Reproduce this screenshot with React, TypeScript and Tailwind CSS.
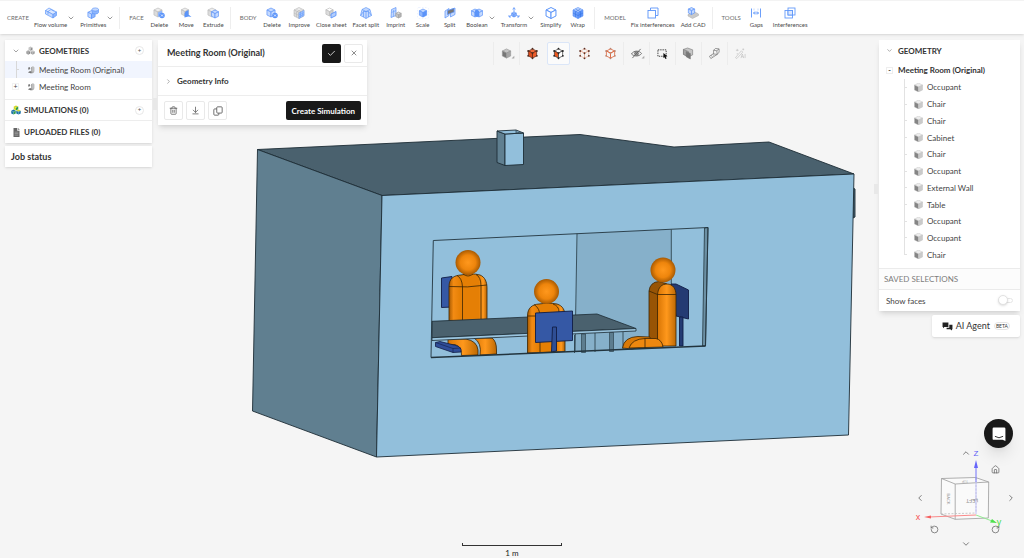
import React from "react";
import {
  ArrowDownToLine,
  Check,
  ChevronDown,
  ChevronLeft,
  ChevronRight,
  ChevronUp,
  Copy,
  House,
  RotateCcw,
  RotateCw,
  Trash2,
  X,
} from "lucide-react";

const BLUE = "#5b94f9";
const PALE = "#c4d9fe";

type CubeProps = {
  x?: number;
  y?: number;
  s?: number;
  top?: string;
  left?: string;
  right?: string;
  stroke?: string;
  width?: number;
};

function Cube({ x = 12, y = 12, s = 9, top = PALE, left = PALE, right = PALE, stroke = BLUE, width = 1.4 }: CubeProps) {
  const w = s * 0.9;
  const h = s * 0.45;
  return (
    <g stroke={stroke} strokeWidth={width} strokeLinejoin="round">
      <path d={`M${x} ${y - s} L${x + w} ${y - s + h} L${x} ${y - s + 2 * h} L${x - w} ${y - s + h}Z`} fill={top} />
      <path d={`M${x - w} ${y - s + h} L${x} ${y - s + 2 * h} V${y + s} L${x - w} ${y + s - h}Z`} fill={left} />
      <path d={`M${x + w} ${y - s + h} L${x} ${y - s + 2 * h} V${y + s} L${x + w} ${y + s - h}Z`} fill={right} />
    </g>
  );
}

const greyCube = { top: "#ededed", left: "#dcdcdc", right: "#cfcfcf", stroke: "#bdbdbd" };

const icons: Record<string, React.ReactNode> = {
  flow: (
    <g stroke={BLUE} strokeWidth="1.3" strokeLinejoin="round">
      <path d="M1 7 L8 2 L23 10 L16 15Z" fill="#dce8ff" />
      <path d="M1 7 L16 15 V22 L1 14Z" fill={PALE} />
      <path d="M23 10 L16 15 V22 L23 17Z" fill="#8fb6fc" />
      <path d="M6 9 L12 5 L19 9 M6 9 V15" fill="none" />
    </g>
  ),
  primitives: (
    <g>
      <Cube x={9} y={15} s={8} right="#8fb6fc" />
      <path d="M10 5 V11 C12 15 22 15 23 11 V5" fill="#8fb6fc" stroke={BLUE} strokeWidth="1.3" />
      <ellipse cx="16.500" cy="5" rx="6.500" ry="3.200" fill={PALE} stroke={BLUE} strokeWidth="1.300" />
    </g>
  ),
  delete: (
    <g>
      <Cube x={10} y={11} s={9} {...greyCube} />
      <path d="M10 11 L18 7 V15 L10 20Z" fill="#8fb6fc" />
      <circle cx="18" cy="17" r="5.500" fill={BLUE} />
      <path d="M16 15 L20 19 M20 15 L16 19" stroke="white" strokeWidth="1.500" />
    </g>
  ),
  bodyDelete: (
    <g>
      <Cube x={10} y={11} s={9} />
      <circle cx="18" cy="17" r="5.500" fill={BLUE} />
      <path d="M16 15 L20 19 M20 15 L16 19" stroke="white" strokeWidth="1.500" />
    </g>
  ),
  move: (
    <g>
      <Cube x={10} y={10} s={8} {...greyCube} />
      <path d="M11 9 L17 6 V15 L23 20 L17 19 L9 21 V13Z" fill={BLUE} />
    </g>
  ),
  extrude: (
    <g>
      <Cube x={10} y={11} s={9} {...greyCube} />
      <Cube x={16} y={14} s={8} />
    </g>
  ),
  improve: (
    <g>
      <Cube {...greyCube} s={11} right={PALE} />
      <path d="M12 12 L22 7 V17 L12 23Z" fill="#b4cefd" stroke={BLUE} />
      <path d="M15 10 V21 M18.500 9 V19 M12 16 L22 11 M12 20 L22 14" stroke={BLUE} />
      <path d="M7 5 L17 10 M17 5 L7 10 V20 M2 12 L12 17" stroke="#b5b5b5" fill="none" />
    </g>
  ),
  sheet: (
    <g>
      <Cube x={9} y={10} s={8} {...greyCube} top="white" />
      <path d="M12 14 L22 9 V17 L12 22Z" fill="#b4cefd" stroke={BLUE} strokeWidth="1.800" />
    </g>
  ),
  facet: (
    <g stroke={BLUE} strokeWidth="1.300" strokeLinejoin="round">
      <path d="M12 1 L20 5 L23 17 L12 23 L1 17 L4 5Z" fill={PALE} />
      <path d="M4 5 L12 9 L20 5 M1 17 L7 9 L12 9 L17 9 L23 17 M12 9 V23 M7 9 V20 M17 9 V20" fill="none" />
    </g>
  ),
  imprint: (
    <g>
      <path d="M3 5 L12 1 V17 L2 21Z" fill={PALE} stroke={BLUE} strokeWidth="1.400" />
      <path d="M7 6 V18 M3 11 L12 7" stroke={BLUE} />
      <Cube x={17} y={16} s={6} top="#dcdcdc" left="#c4c4c4" right="#b4b4b4" stroke="#a5a5a5" />
    </g>
  ),
  scale: (
    <g>
      <rect x="1" y="1" width="22" height="22" rx="3" fill="none" stroke="#dbe7fe" strokeDasharray="3 3" />
      <Cube s={8} top={PALE} left="#8fb6fc" right={BLUE} />
    </g>
  ),
  split: (
    <g stroke={BLUE} strokeWidth="1.400">
      <path d="M2 8 L10 3 V17 L2 22Z" fill={PALE} />
      <path d="M13 5 L22 2 V15 L13 20Z" fill={PALE} />
      <path d="M7 7 L20 3 V10 L7 15Z" fill="#777" />
    </g>
  ),
  boolean: (
    <g>
      <Cube x={8} s={8} />
      <Cube x={16} s={8} />
      <path d="M12 5 L16 8 V18 L12 20 L8 18 V8Z" fill={BLUE} />
    </g>
  ),
  transform: (
    <g stroke={BLUE} strokeWidth="1.500">
      <path d="M12 2 V12 M9.500 5 L12 1 L14.500 5 M12 12 L2 20 M12 12 L22 20 M2 16 V20 H6 M22 16 V20 H18" fill="none" />
      <Cube y={15} s={5} left="#8fb6fc" right="#8fb6fc" />
    </g>
  ),
  simplify: <Cube s={11} top="white" left="white" right="white" width={2} />,
  wrap: (
    <g>
      <Cube s={11} top={PALE} left="#6fa0f9" right="#5b92f8" />
      <path d="M7 4 L17 9 V20 M17 4 L7 9 V20 M2 12 L12 17 L22 12" fill="none" stroke="#2f6fe0" />
    </g>
  ),
  fix: (
    <g fill="none" stroke={BLUE} strokeWidth="1.800">
      <path d="M7 7 V2 H22 V17 H17" />
      <rect x="2" y="7" width="15" height="15" fill="white" />
    </g>
  ),
  cad: (
    <g>
      <path d="M2 15 L14 9 L23 14 V17 L11 23 L2 18Z" fill="#c9c9c9" stroke="#aaa" />
      <Cube x={9} y={8} s={7} />
    </g>
  ),
  gaps: (
    <g fill="none" stroke={BLUE} strokeWidth="1.800">
      <path d="M3 3 V21 M21 3 V21 M7 12 H17 M10 9 L7 12 L10 15 M14 9 L17 12 L14 15" />
      <path d="M8 3 V7 M16 3 V7" stroke={PALE} />
    </g>
  ),
  interferences: (
    <g fill="none" stroke={BLUE} strokeWidth="1.700">
      <rect x="8" y="2" width="14" height="14" />
      <rect x="2" y="7" width="15" height="15" />
      <rect x="8" y="7" width="9" height="9" fill="#dbe7fe" />
    </g>
  ),
};

function Glyph({ name }: { name: string }) {
  return (
    <svg viewBox="0 0 24 24" className="size-3" aria-hidden="true">
      {icons[name]}
    </svg>
  );
}

type Tool = { label: string; icon: string; menu?: boolean };

const toolGroups: { title: string; tools: Tool[] }[] = [
  {
    title: "CREATE",
    tools: [
      { label: "Flow volume", icon: "flow", menu: true },
      { label: "Primitives", icon: "primitives", menu: true },
    ],
  },
  {
    title: "FACE",
    tools: [
      { label: "Delete", icon: "delete" },
      { label: "Move", icon: "move" },
      { label: "Extrude", icon: "extrude" },
    ],
  },
  {
    title: "BODY",
    tools: [
      { label: "Delete", icon: "bodyDelete" },
      { label: "Improve", icon: "improve" },
      { label: "Close sheet", icon: "sheet" },
      { label: "Facet split", icon: "facet" },
      { label: "Imprint", icon: "imprint" },
      { label: "Scale", icon: "scale" },
      { label: "Split", icon: "split" },
      { label: "Boolean", icon: "boolean", menu: true },
      { label: "Transform", icon: "transform", menu: true },
      { label: "Simplify", icon: "simplify" },
      { label: "Wrap", icon: "wrap" },
    ],
  },
  {
    title: "MODEL",
    tools: [
      { label: "Fix interferences", icon: "fix" },
      { label: "Add CAD", icon: "cad" },
    ],
  },
  {
    title: "TOOLS",
    tools: [
      { label: "Gaps", icon: "gaps" },
      { label: "Interferences", icon: "interferences" },
    ],
  },
];

function TopBar() {
  return (
    <header className="relative z-10 flex h-[34px] shrink-0 items-center border-t border-[#f3f3f3] bg-white pl-[7px] text-[6px] shadow-sm">
      {toolGroups.map((group, i) => (
        <section
          key={group.title}
          className={i ? "ml-[3px] flex items-center border-l border-[#eeeeee] pl-[9px]" : "flex items-center"}
        >
          <h2 className="mr-[2px] text-[#6b6b6b]">{group.title}</h2>
          {group.tools.map((tool) => (
            <button key={tool.label} className="flex items-center text-[#4a4a4a]">
              <span className="flex min-w-[27px] flex-col items-center gap-px px-[3px] leading-[9px] whitespace-nowrap">
                <Glyph name={tool.icon} />
                {tool.label}
              </span>
              {tool.menu && <ChevronDown className="-ml-[3px] mr-[2px] size-2 text-[#666]" />}
            </button>
          ))}
        </section>
      ))}
    </header>
  );
}

function AddButton({ label }: { label: string }) {
  return (
    <button
      aria-label={label}
      className="ml-auto flex size-[9px] items-center justify-center rounded-full border border-[#e8e8e8] text-[6px] leading-none text-[#555]"
    >
      +
    </button>
  );
}

function PartsIcon({ className, colors }: { className: string; colors: string[] }) {
  return (
    <svg viewBox="0 0 24 24" className={className} aria-hidden="true">
      <Cube x={12} y={7} s={6} top={colors[0]} left={colors[0]} right={colors[1]} stroke="none" />
      <Cube x={6} y={17} s={6} top={colors[2]} left={colors[2]} right={colors[1]} stroke="none" />
      <Cube x={18} y={17} s={6} top={colors[0]} left={colors[2]} right={colors[2]} stroke="none" />
    </svg>
  );
}

function MeshIcon() {
  return (
    <svg viewBox="0 0 24 24" className="size-2 shrink-0" aria-hidden="true">
      <path d="M12 4 L18 1 L22 4 V15 C22 20 17 23 11 22 L3 19 L9 16 C13 16 13 13 12 10Z" fill="#a9a9a9" />
      <path d="M3 5 L8 3 L10 8 L5 12Z M3 19 L9 16 L15 18 L11 22Z" fill="#777" />
      <path d="M18 1 V17" stroke="#e8e8e8" strokeWidth="2" />
    </svg>
  );
}

function LeftPanel() {
  return (
    <aside className="w-[147px] shrink-0 text-[8px] leading-[10px] text-[#444]">
      <div className="bg-white shadow-sm">
        <section className="border-b border-[#ededed] pb-[4px]">
          <div className="flex h-[21px] items-center pr-2 pl-[7px]">
            <button aria-label="Collapse geometries">
              <ChevronDown className="size-2 text-[#777]" />
            </button>
            <PartsIcon className="ml-[6px] size-[9px]" colors={["#c4c4c4", "#8b8b8b", "#a3a3a3"]} />
            <h2 className="ml-1 font-bold text-[#333]">GEOMETRIES</h2>
            <AddButton label="Add geometry" />
          </div>
          <ul>
            <li className="flex h-[17px] items-center bg-[#f1f5fe]">
              <span className="ml-[11px] flex h-full w-[3px] items-center border-l border-[#d8d8d8]">
                <i className="h-px w-full bg-[#d8d8d8]" />
              </span>
              <a href="#original" className="ml-2 flex items-center gap-1">
                <MeshIcon />
                Meeting Room (Original)
              </a>
            </li>
            <li className="flex h-[17px] items-center">
              <button
                aria-label="Expand Meeting Room"
                className="ml-[7px] flex size-[7px] items-center justify-center border border-[#f2f2f2] text-[7px] leading-none"
              >
                +
              </button>
              <a href="#room" className="ml-2 flex items-center gap-1">
                <MeshIcon />
                Meeting Room
              </a>
            </li>
          </ul>
        </section>
        <section className="flex h-[21px] items-center border-b border-[#ededed] pr-2 pl-[6px]">
          <PartsIcon className="size-[10px]" colors={["#d2d827", "#2f9c50", "#1c72a8"]} />
          <h2 className="ml-[3px] font-bold text-[#333]">SIMULATIONS (0)</h2>
          <AddButton label="Add simulation" />
        </section>
        <section className="flex h-[22px] items-center pl-[6px]">
          <svg viewBox="0 0 20 24" className="ml-px mr-[3px] size-[9px]" aria-hidden="true">
            <path d="M2 0 H12 V7 H18 V24 H2Z" fill="#666" />
            <path d="M14 0 L18 5 H14Z M5 11 H15 M5 15 H15 M5 19 H15" fill="#666" stroke="#bbb" strokeWidth="1.500" />
          </svg>
          <h2 className="font-bold text-[#333]">UPLOADED FILES (0)</h2>
        </section>
      </div>
      <h2 className="mt-[3px] bg-white py-[5px] pl-[6px] text-[9px] leading-[11px] font-bold text-[#333] shadow-sm">Job status</h2>
    </aside>
  );
}

function DetailPanel() {
  const square = "flex size-[19px] items-center justify-center rounded-[2px] border border-[#e9e9e9] bg-white text-[#555]";
  return (
    <section className="ml-[6px] w-[209px] shrink-0 self-start bg-white text-[8px] text-[#333] shadow-md">
      <div className="flex h-[27px] items-center gap-[3px] border-b border-[#ededed] pr-[4px] pl-[9px]">
        <h2 className="mr-auto text-[9px] font-bold">Meeting Room (Original)</h2>
        <button aria-label="Apply" className="flex size-[19px] items-center justify-center rounded-[2px] bg-[#191919] text-white">
          <Check className="size-[9px]" />
        </button>
        <button aria-label="Close" className={square}>
          <X className="size-2" />
        </button>
      </div>
      <button className="flex h-[29px] w-full items-center gap-[5px] border-b border-[#ededed] pl-[7px] font-bold">
        <ChevronRight className="size-[7px] text-[#777]" />
        Geometry Info
      </button>
      <div className="flex h-[29px] items-center gap-[3px] px-[6px]">
        <button aria-label="Delete geometry" className={square}>
          <Trash2 className="size-[9px]" />
        </button>
        <button aria-label="Download geometry" className={square}>
          <ArrowDownToLine className="size-[9px]" />
        </button>
        <button aria-label="Duplicate geometry" className={square}>
          <svg viewBox="0 0 24 24" className="size-[10px]" fill="none" stroke="currentColor" strokeWidth="2">
            <rect x="9" y="2" width="13" height="15" rx="2" />
            <path d="M9 7 H4 Q2 7 2 9 V20 Q2 22 4 22 H12 Q14 22 14 20 V17" />
          </svg>
        </button>
        <button className="ml-auto h-[19px] rounded-[2px] bg-[#191919] px-[6px] font-bold text-white">Create Simulation</button>
      </div>
    </section>
  );
}

function Dots({ color }: { color: string }) {
  const points = [
    [12, 1.5],
    [21.5, 6.5],
    [21.5, 17],
    [12, 22.5],
    [2.5, 17],
    [2.5, 6.5],
    [12, 11.5],
  ];
  return (
    <g fill={color}>
      {points.map(([x, y]) => (
        <circle key={`${x}-${y}`} cx={x} cy={y} r="2" />
      ))}
    </g>
  );
}

const viewTools: { label: string; art: React.ReactNode; rule?: boolean; menu?: boolean; on?: boolean }[] = [
  { label: "Render mode", rule: true, menu: true, art: <Cube s={10} top="#c4c4c4" left="#777" right="#a5a5a5" stroke="#949494" /> },
  {
    label: "Select bodies",
    rule: true,
    art: (
      <g>
        <Cube s={10} top="#f26a3a" left="#d94c1e" right="#ee5d2b" stroke="#5a2413" width={1.5} />
        <Dots color="#4a2a20" />
      </g>
    ),
  },
  {
    label: "Select faces",
    on: true,
    art: (
      <g>
        <Cube s={10} top="white" left="#e8571f" right="white" stroke="#333" width={1.5} />
        <Dots color="#222" />
      </g>
    ),
  },
  {
    label: "Select vertices",
    art: (
      <g>
        <Cube s={10} top="none" left="none" right="none" stroke="#e9aa93" />
        <Dots color="#5b2c1e" />
      </g>
    ),
  },
  {
    label: "Select edges",
    art: (
      <g>
        <Cube s={10} top="none" left="none" right="none" stroke="#e06a40" width={1.8} />
        <Dots color="#b9826f" />
      </g>
    ),
  },
  {
    label: "Hide",
    rule: true,
    menu: true,
    art: (
      <g fill="none" stroke="#666" strokeWidth="2">
        <path d="M1 13 C6 5 18 5 23 12 C18 19 7 19 1 13Z" />
        <circle cx="12" cy="12" r="4" fill="#999" />
        <path d="M3 22 L21 2" />
      </g>
    ),
  },
  {
    label: "Box select",
    rule: true,
    art: (
      <g>
        <rect x="2" y="4" width="18" height="14" fill="none" stroke="#333" strokeWidth="2" strokeDasharray="3 2" />
        <path d="M14 11 L23 18 L19 18.500 L21 23 L18.500 24 L16.500 20 L14 22Z" fill="#111" />
      </g>
    ),
  },
  {
    label: "Section cut",
    rule: true,
    art: (
      <g stroke="#777" strokeWidth="1.300" strokeLinejoin="round">
        <path d="M1 3 L10 0 L21 4 V15 L12 19 L1 14Z" fill="#c6c6c6" />
        <path d="M1 3 L12 8 V19 L1 14Z" fill="#a3a3a3" />
        <path d="M7 8 L16 12 V24 L7 19Z" fill="#777" />
      </g>
    ),
  },
  {
    label: "Measure",
    rule: true,
    art: (
      <g stroke="#777" strokeWidth="1.600" fill="none" strokeLinejoin="round">
        <path d="M10 13 V5 L14 1 L22 2 V9 L18 14 L10 13 M10 5 L17 6 L22 2 M17 6 L18 14" />
        <path d="M10 12 L1 18 L4 23 L18 14" />
        <path d="M5 16 L7 19 M9 14 L11 17" />
      </g>
    ),
  },
  {
    label: "AI selection",
    rule: true,
    art: (
      <g stroke="#c6c6c6" strokeWidth="1.600" fill="none">
        <path d="M1 21 L14 6 L17 9 L4 23Z M5 2 V7 M2 5 H8 M18 1 V5 M16 3 H20 M5 11 V14" />
        <path d="M13 22 L16 13 L19 22 M14 19 H18 M22 13 V22" />
      </g>
    ),
  },
];

function ViewBar() {
  return (
    <div role="toolbar" aria-label="Viewport" className="flex min-w-0 flex-1 items-start justify-center pt-[2px]">
      {viewTools.map((tool) => (
        <div
          key={tool.label}
          className={
            tool.rule
              ? "flex h-[23px] w-[26px] items-center justify-center border-l border-[#ececec]"
              : "flex h-[23px] w-[26px] items-center justify-center"
          }
        >
          <button
            aria-label={tool.label}
            className={
              tool.on
                ? "flex size-[23px] items-center justify-center rounded-[2px] border border-[#dbe6f8] bg-[#fbfbfb]"
                : "flex size-[21px] items-center justify-center"
            }
          >
            <svg viewBox="0 0 24 24" className="size-[11px] overflow-visible">
              {tool.art}
              {tool.menu && <path d="M29 17 V23 H23Z" fill="#aaa" />}
            </svg>
          </button>
        </div>
      ))}
    </div>
  );
}

const parts = [
  "Occupant",
  "Chair",
  "Chair",
  "Cabinet",
  "Chair",
  "Occupant",
  "External Wall",
  "Table",
  "Occupant",
  "Occupant",
  "Chair",
];

function RightPanel() {
  return (
    <aside className="flex w-[141px] shrink-0 flex-col text-[8px] leading-[10px] text-[#444]">
      <div className="bg-white shadow-md">
        <div className="flex h-[21px] items-center gap-[5px] pl-[7px] font-bold text-[#333]">
          <button aria-label="Collapse geometry">
            <ChevronDown className="size-[7px] text-[#777]" />
          </button>
          <h2>GEOMETRY</h2>
        </div>
        <div className="flex h-[18px] items-center gap-[5px] pl-[7px] font-bold text-[#333]">
          <button
            aria-label="Collapse Meeting Room"
            className="flex size-[7px] items-center justify-center border border-[#eeeeee] text-[7px] leading-none"
          >
            -
          </button>
          Meeting Room (Original)
        </div>
        <ul className="flex h-[184px] flex-col pl-[25px]">
          {parts.map((part, i) => (
            <li key={i} className="flex flex-1 items-center">
              <span className="flex h-full w-[3px] flex-col">
                <i className="w-full flex-1 border-b border-l border-[#e2e2e2]" />
                <i className={i < parts.length - 1 ? "w-full flex-1 border-l border-[#e2e2e2]" : "w-full flex-1"} />
              </span>
              <svg viewBox="0 0 24 24" className="mr-1 ml-[7px] size-[9px]" aria-hidden="true">
                <Cube s={12} top="#ececec" left="#858585" right="#cacaca" stroke="#bcbcbc" width={1} />
              </svg>
              {part}
            </li>
          ))}
        </ul>
        <h3 className="mt-[5px] border-y border-[#ebebeb] bg-[#fcfcfc] py-[5px] pl-[5px] text-[#7c7c7c]">SAVED SELECTIONS</h3>
        <label className="flex h-[21px] items-center justify-between pr-[7px] pl-[7px]">
          Show faces
          <input
            type="checkbox"
            className="relative h-[5px] w-[15px] appearance-none rounded-full border border-[#e6e6e6] bg-white before:absolute before:-top-[4px] before:-left-px before:size-[10px] before:rounded-full before:border before:border-[#e2e2e2] before:bg-white before:shadow-sm"
          />
        </label>
      </div>
      <button className="mt-1 flex h-[22px] items-center self-end rounded-[2px] bg-white px-[10px] text-[9px] text-[#333] shadow-sm">
        <svg viewBox="0 0 24 20" className="h-[9px] w-[11px]" aria-hidden="true">
          <path d="M1 1 H14 V11 H5 L2 14 V11 H1Z" fill="#222" />
          <path d="M16 6 H23 V16 H22 V19 L18 16 H10 V13 H16Z" fill="#222" />
        </svg>
        <span className="ml-[3px]">AI Agent</span>
        <span className="ml-1 rounded-full border border-[#e4e4e4] px-px text-[5px] leading-[6px]">BETA</span>
      </button>
    </aside>
  );
}

function Scene() {
  return (
    <svg
      viewBox="0 34 1024 524"
      className="absolute inset-0 h-full w-full"
      role="img"
      aria-label="Meeting room model"
      strokeLinejoin="round"
    >
      <defs>
        <radialGradient id="head">
          <stop offset="0" stopColor="#ff981d" />
          <stop offset="0.600" stopColor="#ee850c" />
          <stop offset="1" stopColor="#a85a02" />
        </radialGradient>
        <linearGradient id="torso">
          <stop offset="0" stopColor="#a85b02" />
          <stop offset="0.120" stopColor="#f38b13" />
          <stop offset="0.300" stopColor="#e57f05" />
          <stop offset="0.780" stopColor="#e57f05" />
          <stop offset="0.900" stopColor="#ff991f" />
          <stop offset="1" stopColor="#b26204" />
        </linearGradient>
        <linearGradient id="limb">
          <stop offset="0" stopColor="#d87504" />
          <stop offset="0.500" stopColor="#ff981c" />
          <stop offset="1" stopColor="#bd6904" />
        </linearGradient>
      </defs>

      <g stroke="#1d2d36" strokeWidth="0.9">
        <path d="M853 188 L855 189 V217 L853 218Z" fill="#4b6472" />
        <path d="M257.500 149.500 L580 134.500 L674 147 L769 142 L854 174 L382 195.500Z" fill="#4a616e" />
        <path d="M257.500 149.500 L382 195.500 L376.500 457 L252.500 411Z" fill="#607f90" />
        <path d="M382 195.500 L854 174 L848.500 435 L376.500 457Z" fill="#92bfdb" />
        <path d="M497 131 L505 134 V165.500 L497 162.500Z" fill="#607f90" />
        <path d="M505 134 L523.500 133 V164.500 L505 165.500Z" fill="#92bfdb" />
        <path d="M497 131 L516 130 L523.500 133 L505 134Z" fill="#92bfdb" />
        <path d="M516 130 V133.300 M516 132 L521 133" fill="none" strokeWidth="0.600" />
      </g>

      <g stroke="#233740" strokeWidth="0.800">
        <path d="M577 233.700 L671.300 229.500 V348 L575 352Z" fill="#86b0ca" stroke="none" />
        <path d="M577 233.700 L575 352 M671.300 229.500 V300" />
        <path d="M581.500 334 H585.500 V352.500 H581.500Z M609.500 332.500 H613.500 V351.500 H609.500Z" fill="#5d7d8f" strokeWidth="0.600" />
        <path d="M574.500 335 V353 M595 333 V352 M623 332 V350" />
        <path d="M704.500 228 L708 227.500 L705.500 346 L702.500 346Z" fill="#6c90a4" />
      </g>

      <g stroke="#111d45" strokeWidth="0.9">
        <path d="M441.500 278 L452 276.500 V307 L441.500 307.500Z" fill="#3558a5" />
        <path d="M671 284 L676 284 L688.500 290 V319 L676 316Z" fill="#243b73" />
        <path d="M679.500 317 H683 V346 H679.500Z" fill="#243b73" />
      </g>

      <g stroke="#3b2404" strokeWidth="0.800">
        <path d="M449 323 V287 C449 278 454 275.500 461 275 C467 273.500 475 273.500 480 275 C485 277 487 282 487 288 V323Z" fill="url(#torso)" />
        <path d="M449 286.500 Q467 288 487 285 M457 275.500 Q462 278 462.500 287 V320 M476 274.500 Q481 277 481 286 V320" fill="none" />
        <path d="M463 274 Q468 278 473 274" fill="none" />
        <path d="M474 338 H492 Q496.500 341 496.500 350 V354 L480 355 Q482 343 474 338Z" fill="url(#limb)" />
        <path d="M448 339 H466 Q477 341 478 350 V355 L461.500 355.500 Q462 347 455 344.500 L448 345Z" fill="url(#limb)" />
      </g>
      <g stroke="#111d45" strokeWidth="0.800">
        <path d="M435.500 342.500 L440 341.500 L454 345 Q460 346 461 349 V352 L453 352.500 L435.500 346.500Z" fill="#2f4d98" />
        <path d="M435.500 342.500 L453 348.500 L461 348 M453 348.500 V352.500" fill="none" strokeWidth="0.600" />
      </g>
      <circle cx="468" cy="262.500" r="12.500" fill="url(#head)" />

      <g stroke="#1c2b33" strokeWidth="0.800">
        <path d="M432 321.300 L597 314 L636 328.500 L432 337.700Z" fill="#4a616e" />
        <path d="M432 337.700 L636 328.500 V331 L432 340.500Z" fill="#9bc5df" />
      </g>

      <g stroke="#3b2404" strokeWidth="0.800">
        <path d="M527.500 353 V316 C527.500 308 532 304.500 539 304 C545 303 552 303 557 304 C563 306 565 310 565 317 V351.500Z" fill="url(#torso)" />
        <path d="M527.500 316 H540 M534 304.500 Q540 308 540 317 V352 M553 304 Q559 306 559 312" fill="none" />
      </g>
      <circle cx="546.500" cy="291.500" r="12.500" fill="url(#head)" />
      <g stroke="#111d45" strokeWidth="0.9">
        <path d="M535.500 313 L572.500 311 V340.500 L535.500 342.500Z" fill="#3558a5" />
        <path d="M552.500 327 H556.500 V351 L551.500 352Z" fill="#2f4e94" />
      </g>

      <g stroke="#3b2404" strokeWidth="0.800">
        <path d="M649 342 V291 Q650 282 659 281.500 L667 284 L658 293 V345Z" fill="#985405" />
        <path d="M657.500 346 V295 C658 287 662 284 667 284 C673 284 676 289 676 295 V346Z" fill="url(#limb)" />
        <path d="M649 291 L657.500 294.500 H676" fill="none" />
        <path d="M622.500 348 Q624 337 638 336.500 L650 337 V345 L632 349Z" fill="#d97907" />
        <path d="M629 348 Q632 339 645 338.500 H656 Q662 340 663 347Z" fill="#ee880f" />
        <path d="M645 338.500 V348" fill="none" />
      </g>
      <circle cx="663" cy="270" r="12.500" fill="url(#head)" />

      <g fill="none" stroke="#22343e">
        <path d="M431 357.500 L433.300 240.500 L708 227.500 L705.500 346" strokeWidth="0.900" />
        <path d="M431 357.500 L705.500 346" strokeWidth="1.500" />
      </g>
    </svg>
  );
}

function NavCube() {
  const nav = "absolute flex size-[10px] items-center justify-center text-[#666]";
  return (
    <div className="absolute right-2 bottom-2 h-[104px] w-[102px]">
      <svg viewBox="914 446 102 104" className="h-full w-full" aria-label="Orientation cube">
        <g fill="none" stroke="#9c9c9c" strokeWidth="0.800">
          <path
            d="M941.500 478.500 L975.500 477.500 L988.700 482 L988.300 518 L955.200 519.300 L941 514Z"
            fill="#fafafa"
          />
          <path d="M941.500 478.500 L955.200 484 L988.700 482 M955.200 484 V519.300" />
          <path d="M941 514 L976 513 M976 478 V513" stroke="#bbb" strokeDasharray="2 1.500" />
        </g>
        <path d="M976 514 V482" stroke="#c0c0fb" />
        <path d="M976 482 V466" stroke="#7373fa" />
        <path d="M976 460 L978 468 H974Z" fill="#6565fa" />
        <path d="M976 515 L929 517" stroke="#fa8a8a" />
        <path d="M924 517 L931 515.500 V518.500Z" fill="#f56060" />
        <path d="M976 515 L992 521" stroke="#94ec94" />
        <path d="M997 523 L990 522.500 L992 519Z" fill="#4de04d" />
        <g fontFamily="Liberation Sans, sans-serif" textAnchor="middle">
          <text x="976" y="456" fontSize="8" fill="#5c5cf5">Z</text>
          <text x="918" y="520" fontSize="9" fill="#f55252">x</text>
          <text x="999" y="525" fontSize="9" fill="#41dc41">y</text>
          <text fontSize="5" fill="#777" transform="translate(972 499) rotate(178)">LEFT</text>
          <text fontSize="4" fill="#999" transform="translate(947 499) rotate(90)">BACK</text>
          <text fontSize="3" fill="#aaa" transform="translate(965 480) rotate(180)">TOP</text>
        </g>
      </svg>
      <button aria-label="Rotate up" className={`${nav} top-[2px] left-[47px]`}><ChevronUp className="size-[10px]" /></button>
      <button aria-label="Rotate down" className={`${nav} top-[93px] left-[47px]`}><ChevronDown className="size-[10px]" /></button>
      <button aria-label="Rotate left" className={`${nav} top-[47px] left-[1px]`}><ChevronLeft className="size-[10px]" /></button>
      <button aria-label="Rotate right" className={`${nav} top-[47px] left-[92px]`}><ChevronRight className="size-[10px]" /></button>
      <button aria-label="Home view" className={`${nav} top-[18px] left-[76px]`}><House className="size-[9px]" /></button>
      <button aria-label="Roll left" className={`${nav} top-[78px] left-[15px]`}><RotateCcw className="size-[9px]" /></button>
      <button aria-label="Roll right" className={`${nav} top-[78px] left-[76px]`}><RotateCw className="size-[9px]" /></button>
    </div>
  );
}

export default function App() {
  return (
    <div className="flex h-screen flex-col overflow-hidden bg-[#f5f5f5] font-['Lato',sans-serif]">
      <TopBar />
      <main className="relative min-h-0 flex-1">
        <Scene />
        <div className="relative flex items-start pt-[6px] pr-1 pl-[5px]">
          <LeftPanel />
          <DetailPanel />
          <ViewBar />
          <RightPanel />
        </div>
        <i className="absolute top-[64px] left-[153px] h-3 w-1 bg-[#e8e8e8]" />
        <i className="absolute top-[150px] right-[146px] h-[10px] w-1 bg-[#e8e8e8]" />
        <div className="absolute inset-x-0 bottom-0 flex flex-col items-center text-[8px] leading-[10px] text-[#222]">
          <i className="h-[3px] w-[100px] border-x border-b border-[#333]" />
          <span className="mt-[2px]">1 m</span>
        </div>
        <NavCube />
        <button
          aria-label="Open chat"
          className="absolute right-[11px] bottom-[110px] flex size-[29px] items-center justify-center rounded-full bg-[#191919] shadow-lg"
        >
          <svg viewBox="0 0 24 24" className="size-[14px]">
            <path d="M3 1 H21 Q23 1 23 3 V24 L18 22 H3 Q1 22 1 20 V3 Q1 1 3 1Z" fill="white" />
            <path d="M5 16 Q12 21 19 16" fill="none" stroke="#191919" strokeWidth="1.500" />
          </svg>
        </button>
      </main>
    </div>
  );
}
